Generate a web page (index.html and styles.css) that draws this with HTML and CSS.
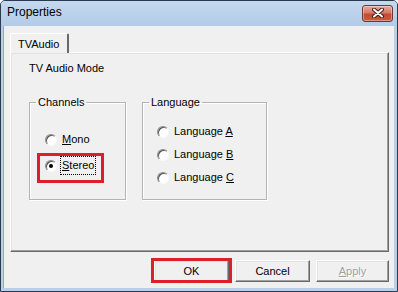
FILE: index.html
```html
<!DOCTYPE html>
<html lang="en">
<head>
  <meta charset="UTF-8">
  <title>Properties</title>
  <link rel="stylesheet" href="styles.css">
</head>
<body>
  <div class="window">
    <div class="titlebar">
      <span class="title">Properties</span>
      <span class="close">
        <svg width="12" height="10" viewBox="0 0 12 10">
          <path d="M2 1.5 L10 8.5 M10 1.5 L2 8.5" stroke="#3b1b18" stroke-width="4" stroke-linecap="round"/>
          <path d="M2 1.5 L10 8.5 M10 1.5 L2 8.5" stroke="#fff" stroke-width="2" stroke-linecap="round"/>
        </svg>
      </span>
    </div>
    <div class="client">
      <div class="tabs">
        <div class="tab">TVAudio</div>
      </div>
      <div class="panel">
        <div class="caption">TV Audio Mode</div>
        <div class="groups">
          <fieldset class="group channels">
            <legend>Channels</legend>
            <div class="radios">
              <div class="radio"><span class="dot"></span><span class="lbl"><u>M</u>ono</span></div>
              <div class="radio marked"><span class="dot on"></span><span class="lbl focus"><u>S</u>tereo</span></div>
            </div>
          </fieldset>
          <fieldset class="group language">
            <legend>Language</legend>
            <div class="radios">
              <div class="radio"><span class="dot"></span><span class="lbl">Language <u>A</u></span></div>
              <div class="radio"><span class="dot"></span><span class="lbl">Language <u>B</u></span></div>
              <div class="radio"><span class="dot"></span><span class="lbl">Language <u>C</u></span></div>
            </div>
          </fieldset>
        </div>
      </div>
      <div class="buttons">
        <button class="btn marked">OK</button>
        <button class="btn">Cancel</button>
        <button class="btn" disabled><u>A</u>pply</button>
      </div>
    </div>
  </div>
</body>
</html>
```

FILE: styles.css
```css
:root {
  --face: #f0f0f0;
  --light: #e3e3e3;
  --shadow: #a0a0a0;
  --dark: #696969;
  --mark: #dc1f2b;
}
* { box-sizing: border-box; }
body {
  margin: 0;
  width: 398px;
  height: 292px;
  overflow: hidden;
  font-family: "Liberation Sans", Arial, sans-serif;
  font-size: 11px;
  color: #000;
  background: #fff;
}
.window {
  height: 292px;
  display: flex;
  flex-direction: column;
  border: 1px solid #2b3a4c;
  border-radius: 5px 5px 0 0;
  background: #b8d0ea;
  padding: 0 3px 3px 2px;
}
.titlebar {
  height: 25px;
  display: flex;
  align-items: center;
  justify-content: space-between;
  background: linear-gradient(#c4d9ef, #b3cbe7);
  margin: 0 -3px 0 -2px;
  padding: 0 4px 3px 6px;
  border-radius: 4px 4px 0 0;
}
.title {
  font-size: 12px;
  color: #000;
}
.close {
  width: 31px;
  height: 17px;
  margin-top: 2px;
  display: flex;
  align-items: center;
  justify-content: center;
  border: 1px solid #6b3a34;
  border-radius: 3px;
  background: linear-gradient(#e9a99b 0%, #d77a68 45%, #c24a34 55%, #c95c45 100%);
  box-shadow: inset 0 0 0 1px rgba(255,255,255,0.35);
}
.client {
  flex: 1;
  display: flex;
  flex-direction: column;
  background: var(--face);
  padding: 7px 5px 6px 6px;
  border-left: 1px solid #8fa9c6;
}
.tabs { display: flex; height: 19px; }
.tab {
  padding: 4px 8px 0 7px;
  border: 1px solid var(--light);
  border-top-color: #fff;
  border-left-color: #fff;
  border-right: 2px solid var(--dark);
  border-bottom: none;
  border-radius: 2px 2px 0 0;
  background: var(--face);
  position: relative;
  z-index: 1;
  margin-bottom: -1px;
}
.panel {
  height: 200px;
  border: 1px solid #fff;
  border-right-color: var(--dark);
  border-bottom-color: var(--dark);
  box-shadow: inset -1px -1px 0 var(--shadow), inset 1px 1px 0 var(--light);
  padding: 9px 0 0 18px;
}
.caption { line-height: 13px; }
.groups {
  display: flex;
  gap: 16px;
  margin-top: 21px;
}
.group {
  margin: 0;
  padding: 0;
  height: 104px;
  border: 1px solid #b4b4b4;
  box-shadow: 1px 1px 0 #fff, inset 1px 1px 0 #fff;
}
.group legend {
  margin-left: 6px;
  padding: 0 2px;
  line-height: 13px;
}
.channels { width: 97px; }
.language { width: 125px; }
.radios {
  display: flex;
  flex-direction: column;
  align-items: flex-start;
}
.channels .radios { padding: 22px 0 0 15px; gap: 9px; }
.language .radios { padding: 14px 0 0 14px; gap: 6px; }
.radio {
  height: 17px;
  display: flex;
  align-items: center;
  gap: 5px;
  position: relative;
}
.dot {
  width: 12px;
  height: 12px;
  border-radius: 50%;
  background: radial-gradient(circle at 60% 60%, #fff 55%, #e8e8e8);
  border: 1px solid;
  border-color: #8c8c8c #fafafa #fafafa #8c8c8c;
  box-shadow: inset 1px 1px 0 #555;
  display: flex;
  align-items: center;
  justify-content: center;
}
.dot.on::after {
  content: '';
  width: 4px;
  height: 4px;
  border-radius: 50%;
  background: #000;
}
.lbl { line-height: 17px; }
.lbl.focus {
  outline: 1px dotted #000;
  padding: 0 1px;
  margin-left: -1px;
}
.radio.marked::after {
  content: '';
  position: absolute;
  inset: -4px -9px -9px -8px;
  border: 3px solid var(--mark);
}
.buttons {
  display: flex;
  justify-content: flex-end;
  gap: 6px;
  margin-top: 8px;
}
.btn {
  width: 75px;
  height: 22px;
  font: inherit;
  color: #000;
  background: var(--face);
  border: 1px solid #fff;
  border-right-color: var(--dark);
  border-bottom-color: var(--dark);
  box-shadow: inset -1px -1px 0 var(--shadow), inset 1px 1px 0 var(--light);
  padding: 0;
  position: relative;
}
.btn:last-child { width: 73px; }
.btn:disabled {
  color: #a0a0a0;
  text-shadow: 1px 1px 0 #fff;
}
.btn.marked::after {
  content: '';
  position: absolute;
  inset: -3px -4px -2px -4px;
  border: 3px solid var(--mark);
}
```
